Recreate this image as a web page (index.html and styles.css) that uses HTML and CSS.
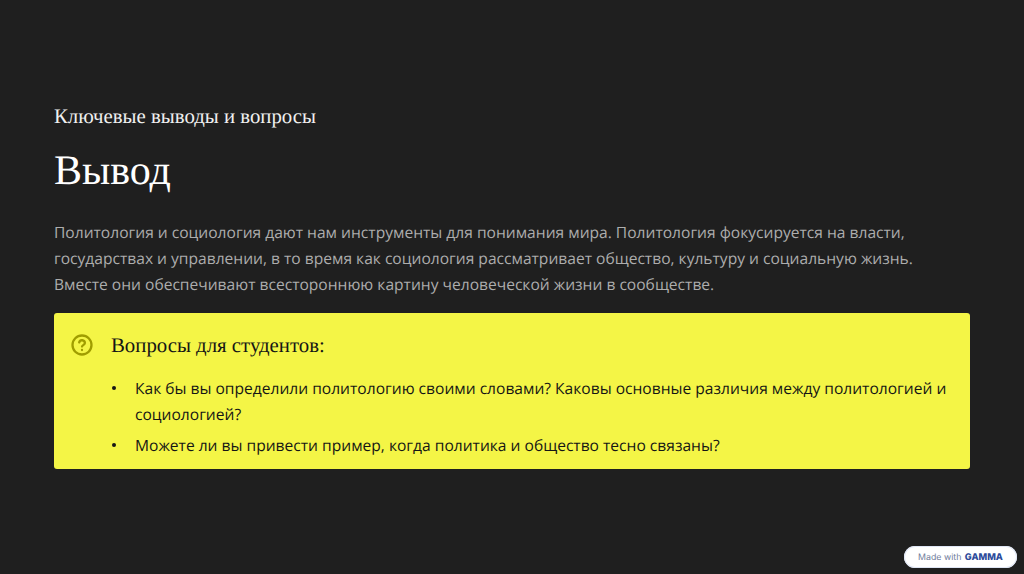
FILE: index.html
```html
<!DOCTYPE html>
<html lang="ru">
<head>
<meta charset="utf-8">
<title>Вывод</title>
<link rel="stylesheet" href="styles.css">
</head>
<body>
<main class="slide">
  <p class="eyebrow">Ключевые выводы и вопросы</p>
  <h1 class="title">Вывод</h1>
  <p class="lead">Политология и социология дают нам инструменты для понимания мира. Политология фокусируется на власти, государствах и управлении, в то время как социология рассматривает общество, культуру и социальную жизнь. Вместе они обеспечивают всестороннюю картину человеческой жизни в сообществе.</p>
  <section class="callout">
    <svg class="callout-icon" viewBox="0 0 24 24" width="24" height="24" fill="none" stroke="#a09d00" stroke-width="2.3" stroke-linecap="round" aria-hidden="true">
      <circle cx="12" cy="12" r="9.5"/>
      <path d="M9.2 9.4a2.9 2.9 0 0 1 5.7.6c0 1.9-2.9 2.2-2.9 3.6"/>
      <path d="M12 17v.1"/>
    </svg>
    <div class="callout-body">
      <h2 class="callout-title">Вопросы для студентов:</h2>
      <ul class="questions">
        <li>Как бы вы определили политологию своими словами? Каковы основные различия между политологией и социологией?</li>
        <li>Можете ли вы привести пример, когда политика и общество тесно связаны?</li>
      </ul>
    </div>
  </section>
</main>
<a class="badge">Made with <b class="badge-brand">GAMMA</b></a>
</body>
</html>
```
FILE: styles.css
```css
* { box-sizing: border-box; }
html, body { margin: 0; height: 100%; }
body {
  background: #1f1f1f;
  font-family: "Open Sans", sans-serif;
  text-rendering: geometricPrecision;
  overflow: hidden;
  position: relative;
}
.slide {
  padding: 104px 54px 0;
  opacity: 0.999;
}
.eyebrow {
  margin: 0;
  font-family: "Liberation Serif", serif;
  font-size: 20.8px;
  line-height: 26px;
  color: #f0f0f0;
}
.title {
  margin: 17px 0 0;
  font-family: "Liberation Serif", serif;
  font-weight: 400;
  font-size: 42px;
  line-height: 48px;
  color: #fff;
}
.lead {
  margin: 24px 0 0;
  font-size: 15.58px;
  line-height: 26px;
  color: #adadad;
}
.callout {
  margin-top: 16px;
  width: 916px;
  height: 156px;
  padding: 21px 16px;
  background: #f4f546;
  border-radius: 3px;
  display: flex;
  gap: 17px;
}
.callout-icon { flex: none; margin-top: -1px; }
.callout-body { flex: 1; min-width: 0; }
.callout-title {
  margin: 0;
  font-family: "Liberation Serif", serif;
  font-weight: 400;
  font-size: 20.8px;
  line-height: 24px;
  color: #151515;
}
.questions {
  list-style: none;
  margin: 17px 0 0;
  padding: 0 0 0 24px;
  font-size: 15.58px;
  line-height: 26px;
  color: #151515;
}
.questions li { margin-bottom: 5px; position: relative; }
.questions li::before {
  content: "";
  position: absolute;
  left: -23px;
  top: 11px;
  width: 4px;
  height: 4px;
  border-radius: 50%;
  background: #151515;
}
.badge {
  position: absolute;
  right: 7px;
  bottom: 6px;
  width: 113px;
  height: 22px;
  border-radius: 11px;
  background: #fff;
  box-shadow: inset 0 0 0 1px #dfe6f5;
  display: flex;
  align-items: center;
  justify-content: center;
  gap: 1px;
  font-family: "Inter", sans-serif;
  font-size: 8.8px;
  color: #6f7d9c;
  white-space: pre;
}
.badge-brand {
  color: #2c4a9a;
  font-weight: 800;
  font-size: 9.2px;
  letter-spacing: 0;
}
```
